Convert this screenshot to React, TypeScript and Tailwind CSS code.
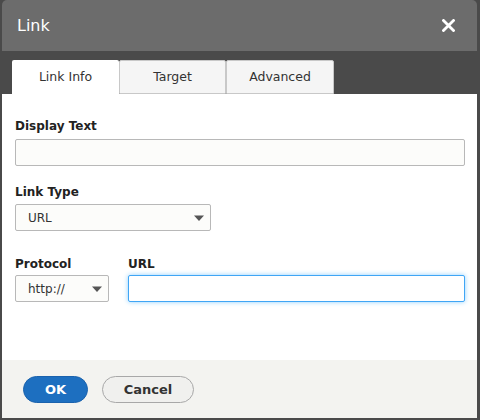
const font = { fontFamily: '"DejaVu Sans", "Liberation Sans", sans-serif' }

function Arrow() {
  return (
    <svg width="10" height="6" viewBox="0 0 10 6" className="shrink-0">
      <path d="M0 0.5 L10 0.5 L5 6 Z" fill="#555" />
    </svg>
  )
}

function Select({ value, className }: { value: string; className: string }) {
  return (
    <div className={`flex items-center justify-between pl-3 pr-[6px] h-[27px] bg-[#fcfcfa] border border-[#b8b8b8] rounded-[2px] text-[12px] text-[#333] ${className}`}>
      <span>{value}</span>
      <Arrow />
    </div>
  )
}

const tabs = ['Link Info', 'Target', 'Advanced']

export default function App() {
  return (
    <div className="w-[480px] h-[420px] bg-[#4a4a4a] pl-[2px] pr-[3px] pb-[2px] flex flex-col" style={font}>
      <div className="h-[51px] shrink-0 bg-[#6c6c6c] rounded-t-[5px] flex items-center justify-between pl-[15px] pr-[22px]">
        <span className="text-[16px] text-white">Link</span>
        <svg width="13" height="13" viewBox="0 0 13 13">
          <path d="M1.5 1.5 L11.5 11.5 M11.5 1.5 L1.5 11.5" stroke="#fff" strokeWidth="2.8" strokeLinecap="square" />
        </svg>
      </div>
      <div className="h-[43px] shrink-0 bg-[#4a4a4a] flex items-end pl-[10px] pt-[9px]">
        {tabs.map((t, i) => (
          <div
            key={t}
            className={`w-[107px] h-[34px] flex items-center justify-center text-[12.5px] text-[#333] rounded-t-[2px] ${
              i === 0 ? 'bg-white' : 'bg-[#f5f5f5] border border-[#c8c8c8] border-b-[#c8c8c8]'
            } ${i === 2 ? 'w-[108px]' : ''}`}
          >
            {t}
          </div>
        ))}
      </div>
      <div className="flex-1 bg-white flex flex-col px-[13px] pt-[24px]">
        <label className="text-[12px] font-bold text-[#222] leading-[16px]">Display Text</label>
        <div className="mt-[5px] h-[27px] bg-[#fcfcfa] border border-[#b8b8b8] rounded-[2px] w-[450px]" />
        <label className="mt-[18px] text-[12px] font-bold text-[#222] leading-[16px]">Link Type</label>
        <Select value="URL" className="mt-[4px] w-[196px]" />
        <div className="mt-[25px] flex gap-[19px]">
          <div className="flex flex-col">
            <label className="text-[12px] font-bold text-[#222] leading-[16px]">Protocol</label>
            <Select value="http://" className="mt-[3px] w-[94px]" />
          </div>
          <div className="flex flex-col">
            <label className="text-[12px] font-bold text-[#222] leading-[16px]">URL</label>
            <div className="mt-[3px] h-[27px] w-[337px] bg-white border border-[#40a6f5] rounded-[2px] shadow-[0_0_5px_#8fd0ff]" />
          </div>
        </div>
      </div>
      <div className="h-[58px] shrink-0 bg-[#f3f3f0] flex items-start gap-[14px] pl-[21px] pt-[16px]">
        <button className="w-[65px] h-[27px] rounded-full bg-[#1d6fc0] border border-[#1a62ad] text-white text-[13px] font-bold">
          OK
        </button>
        <button className="w-[92px] h-[27px] rounded-full bg-[#f0f0ee] border border-[#a8a8a8] text-[#333] text-[13px] font-bold">
          Cancel
        </button>
      </div>
    </div>
  )
}
